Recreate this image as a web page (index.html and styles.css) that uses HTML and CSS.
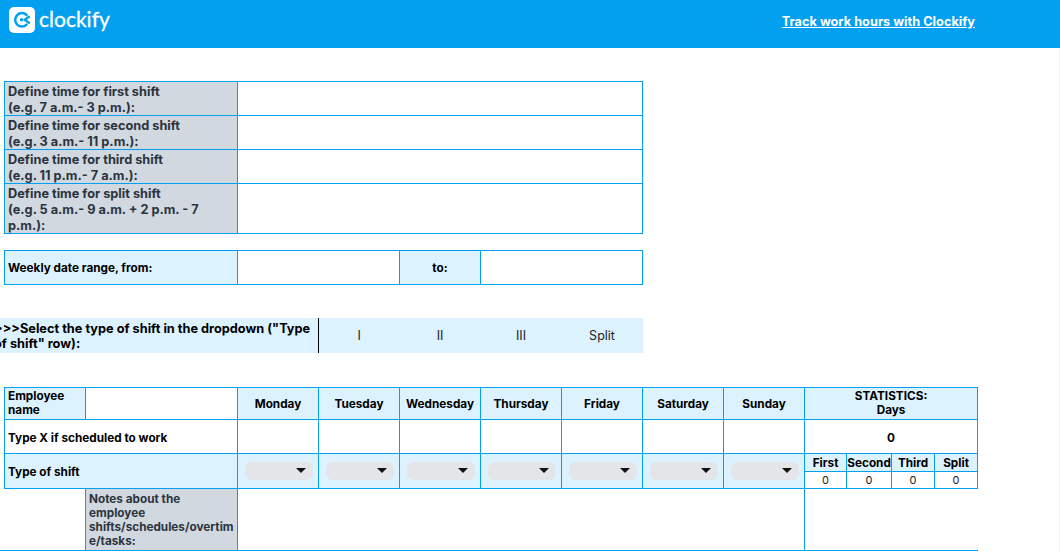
FILE: index.html
```html
<!DOCTYPE html>
<html lang="en">
<head>
<meta charset="utf-8">
<title>Shift schedule template</title>
<link rel="stylesheet" href="styles.css">
</head>
<body>
<header class="topbar">
  <a class="logo" href="#">
    <svg class="logo-mark" width="26" height="26" viewBox="0 0 26 26"><rect width="26" height="26" rx="5" fill="#fff"/><path d="M17.6 8A6.7 6.7 0 1 0 17.6 17.6" fill="none" stroke="#03a0f0" stroke-width="2.5" stroke-linecap="round"/><path d="M20 9.8 15.6 12.8l4.4 3" fill="none" stroke="#03a0f0" stroke-width="2.3" stroke-linecap="round" stroke-linejoin="round"/><circle cx="12.6" cy="12.8" r="1.8" fill="#03a0f0"/></svg>
    <span class="wordmark">clockify</span>
  </a>
  <a class="track-link" href="#">Track work hours with Clockify</a>
</header>
<main class="sheet">
<table class="grid">
  <colgroup>
    <col class="c-m"><col class="c-a"><col class="c-b">
    <col class="c-d"><col class="c-d"><col class="c-d"><col class="c-d"><col class="c-d"><col class="c-d"><col class="c-d">
    <col class="c-s1"><col class="c-s2"><col class="c-s3"><col class="c-s4">
  </colgroup>
  <tbody>
    <tr class="r34"><td></td><th colspan="2" class="label grey"><span class="grey-text">Define time for first shift<br>(e.g. 7 a.m.- 3 p.m.):</span></th><td colspan="5" class="cell"></td></tr>
    <tr class="r34"><td></td><th colspan="2" class="label grey"><span class="grey-text">Define time for second shift<br>(e.g. 3 a.m.- 11 p.m.):</span></th><td colspan="5" class="cell"></td></tr>
    <tr class="r34"><td></td><th colspan="2" class="label grey"><span class="grey-text">Define time for third shift<br>(e.g. 11 p.m.- 7 a.m.):</span></th><td colspan="5" class="cell"></td></tr>
    <tr class="r50"><td></td><th colspan="2" class="label grey"><span class="grey-text">Define time for split shift<br>(e.g. 5 a.m.- 9 a.m. + 2 p.m. - 7 p.m.):</span></th><td colspan="5" class="cell"></td></tr>
    <tr class="gap17"><td colspan="14"></td></tr>
    <tr class="r34"><td></td><th colspan="2" class="label blue">Weekly date range, from:</th><td colspan="2" class="cell"></td><th class="label blue center">to:</th><td colspan="2" class="cell"></td></tr>
    <tr class="gap33"><td colspan="14"></td></tr>
    <tr class="band">
      <th colspan="4" class="band-title"><span class="band-text">&gt;&gt;&gt;Select the type of shift in the dropdown ("Type of shift" row):</span></th>
      <td class="band-opt">I</td><td class="band-opt">II</td><td class="band-opt">III</td><td class="band-opt">Split</td>
    </tr>
    <tr class="gap35"><td colspan="14"></td></tr>
    <tr class="r32">
      <td></td>
      <th class="label blue raise">Employee name</th>
      <td class="cell"></td>
      <th class="label blue center">Monday</th><th class="label blue center">Tuesday</th><th class="label blue center">Wednesday</th><th class="label blue center">Thursday</th><th class="label blue center">Friday</th><th class="label blue center">Saturday</th><th class="label blue center">Sunday</th>
      <th colspan="4" class="label blue center raise">STATISTICS:<br>Days</th>
    </tr>
    <tr class="r34">
      <td></td>
      <th colspan="2" class="label plain nudge">Type X if scheduled to work</th>
      <td class="cell"></td><td class="cell"></td><td class="cell"></td><td class="cell"></td><td class="cell"></td><td class="cell"></td><td class="cell"></td>
      <th colspan="4" class="label plain center nudge">0</th>
    </tr>
    <tr class="r18">
      <td></td>
      <th colspan="2" rowspan="2" class="label blue nudge">Type of shift</th>
      <td rowspan="2" class="label blue"><span class="dropdown"></span></td>
      <td rowspan="2" class="label blue"><span class="dropdown"></span></td>
      <td rowspan="2" class="label blue"><span class="dropdown"></span></td>
      <td rowspan="2" class="label blue"><span class="dropdown"></span></td>
      <td rowspan="2" class="label blue"><span class="dropdown"></span></td>
      <td rowspan="2" class="label blue"><span class="dropdown"></span></td>
      <td rowspan="2" class="label blue"><span class="dropdown"></span></td>
      <th class="label blue center tight">First</th><th class="label blue center tight">Second</th><th class="label blue center tight">Third</th><th class="label blue center tight">Split</th>
    </tr>
    <tr class="r17">
      <td></td>
      <td class="stat">0</td><td class="stat">0</td><td class="stat">0</td><td class="stat">0</td>
    </tr>
    <tr class="r62">
      <td class="notes-edge"></td><td class="notes-spacer"></td>
      <th class="label grey notes">Notes about the employee shifts/schedules/overtime/tasks:</th>
      <td colspan="7" class="cell"></td>
      <td colspan="4" class="cell notes-end"></td>
    </tr>
  </tbody>
</table>
</main>
</body>
</html>
```
FILE: styles.css
```css
* { box-sizing: border-box; }
html, body { margin: 0; padding: 0; height: 100%; overflow: hidden; background: #fff; }
body { font-family: Inter, "Liberation Sans", sans-serif; color: #000; }

.topbar {
  height: 48px;
  background: #03a0f0;
  display: flex;
  align-items: center;
  justify-content: space-between;
  padding: 0 85px 8px 9px;
}
.logo { display: flex; align-items: center; gap: 4px; color: #fff; text-decoration: none; }
.logo-mark { display: block; }
.wordmark { font-family: Lato, sans-serif; font-size: 21px; font-weight: 400; line-height: 26px; margin-top: -2px; -webkit-text-stroke: 0.3px #fff; }
.track-link { color: #fff; font-size: 12.75px; font-weight: 700; text-decoration: underline; margin-top: 2px; }

.sheet { padding-top: 33px; height: calc(100vh - 48px); border-right: 1px solid #f3f3f3; }
.grid { border-collapse: collapse; table-layout: fixed; width: 978px; }
.c-m { width: 4.5px; }
.c-a { width: 81px; }
.c-b { width: 152px; }
.c-d { width: 81px; }
.c-s1 { width: 42px; }
.c-s2 { width: 45px; }
.c-s3 { width: 43px; }
.c-s4 { width: 43px; }

td, th { padding: 0; font-size: 12px; font-weight: 400; }
.r34 { height: 34px; }
.r32 { height: 32px; }
.r50 { height: 50px; }
.r18 { height: 18px; }
.r17 { height: 17px; }
.r62 { height: 62px; }
.gap17 { height: 17px; }
.gap33 { height: 33px; }
.gap35 { height: 35px; }

.label, .cell, .stat { border: 1px solid #03a0f0; }
.label { font-weight: 700; text-align: left; line-height: 14px; padding: 0 3px; font-size: 11.75px; vertical-align: middle; }
.grey { background: #d1d8e0; color: #2b333d; font-size: 12.75px; line-height: 16px; }
.grey-text { display: block; margin: 1px 0 -1px; }
.blue { background: #dcf2fe; }
.plain { background: #fff; }
.center { text-align: center; }
.tight { padding: 1px 0 0; }
.nudge { padding-top: 2px; }
.raise { padding-bottom: 2px; }

.band { height: 35px; background: #dcf2fe; }
.band-title { border-right: 1px solid #000; font-weight: 700; font-size: 12.75px; text-align: left; line-height: 15px; overflow: hidden; padding-top: 2px; }
.band-text { display: block; margin: 0 3px 0 -6px; }
.band-opt { text-align: center; font-size: 12.5px; color: #222; }

.dropdown {
  display: block;
  position: relative;
  height: 18px;
  margin: 0 2px 0 4px;
  border-radius: 7px;
  background: #e3e5e9;
}
.dropdown::after {
  content: "";
  position: absolute;
  right: 7px;
  top: 6px;
  border-style: solid;
  border-width: 5px 5px 0;
  border-color: #111 transparent transparent;
}
.stat { text-align: center; font-size: 11px; line-height: 14px; background: #fff; color: #222; }

.notes { font-size: 11.75px; line-height: 14px; overflow-wrap: anywhere; padding-top: 0; }
.notes-edge, .notes-spacer { border-bottom: 1px solid #03a0f0; }
.notes-end { border-right: 0; }
```
